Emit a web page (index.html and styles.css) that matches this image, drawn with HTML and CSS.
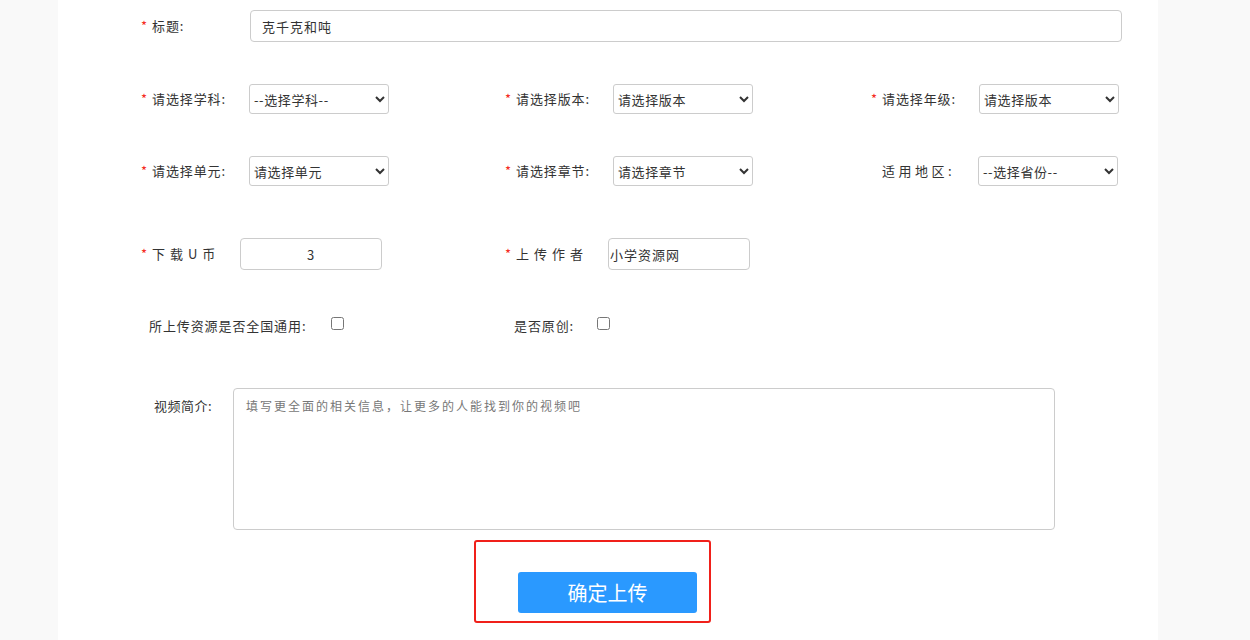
FILE: index.html
```html
<!DOCTYPE html>
<html lang="zh-CN">
<head>
<meta charset="utf-8">
<title>上传视频</title>
<link rel="stylesheet" href="styles.css">
</head>
<body>
<div class="page">
  <div class="main">
    <div class="row row-title">
      <label class="lbl w109"><span class="star">*</span>标题:</label>
      <input class="txt title-input" type="text" value="克千克和吨">
    </div>

    <div class="row row-sel r2">
      <div class="grp g1"><label class="lbl w108"><span class="star">*</span>请选择学科:</label><select class="sel"><option>--选择学科--</option></select></div>
      <div class="grp g2"><label class="lbl w108"><span class="star">*</span>请选择版本:</label><select class="sel"><option>请选择版本</option></select></div>
      <div class="grp g3"><label class="lbl w108"><span class="star">*</span>请选择年级:</label><select class="sel"><option>请选择版本</option></select></div>
    </div>

    <div class="row row-sel r3">
      <div class="grp g1"><label class="lbl w108"><span class="star">*</span>请选择单元:</label><select class="sel"><option>请选择单元</option></select></div>
      <div class="grp g2"><label class="lbl w108"><span class="star">*</span>请选择章节:</label><select class="sel"><option>请选择章节</option></select></div>
      <div class="grp g3"><label class="lbl w107"><span class="star"></span><span class="spaced">适用地区</span>:</label><select class="sel"><option>--选择省份--</option></select></div>
    </div>

    <div class="row row-inp r4">
      <div class="grp g1"><label class="lbl w99"><span class="star">*</span><span class="spaced">下载U币</span></label><input class="txt coin" type="text" value="3"></div>
      <div class="grp g2"><label class="lbl w103"><span class="star">*</span><span class="spaced">上传作者</span></label><input class="txt author" type="text" value="小学资源网"></div>
    </div>

    <div class="row row-chk r5">
      <div class="grp g1 chk1"><span class="chk-text">所上传资源是否全国通用:</span><input class="chk" type="checkbox"></div>
      <div class="grp g2 chk2"><span class="chk-text">是否原创:</span><input class="chk" type="checkbox"></div>
    </div>

    <div class="row row-area r6">
      <label class="area-lbl">视频简介:</label>
      <textarea class="area" placeholder="填写更全面的相关信息，让更多的人能找到你的视频吧"></textarea>
    </div>

    <div class="submit-box">
      <button class="btn" type="button">确定上传</button>
    </div>
  </div>
</div>
</body>
</html>
```

FILE: styles.css
```css
* { box-sizing: border-box; }

html, body {
  margin: 0;
  padding: 0;
  background: #f9f9f9;
  font-family: "Noto Sans CJK SC", "Microsoft YaHei", sans-serif;
  font-size: 13px;
  color: #333;
}

.page {
  display: flex;
  justify-content: flex-start;
  padding-left: 58px;
}

.main {
  width: 1100px;
  min-height: 640px;
  background: #fff;
  padding-top: 10px;
}

.row {
  display: flex;
  align-items: center;
  padding-left: 83px;
}

.row-title { height: 32px; }
.r2 { margin-top: 42px; height: 30px; }
.r3 { margin-top: 42px; height: 30px; }
.r4 { margin-top: 52px; height: 32px; }
.r5 { margin-top: 45px; height: 20px; }
.r6 { margin-top: 53px; align-items: flex-start; }

.grp {
  display: flex;
  align-items: center;
}
.g1 { width: 364px; }
.g2 { width: 366px; }

.lbl {
  display: flex;
  align-items: center;
  white-space: nowrap;
  color: #333;
  line-height: 18px;
  letter-spacing: 0.9px;
}
.w109 { width: 109px; }
.w108 { width: 108px; }
.w107 { width: 107px; }
.w103 { width: 103px; }
.w99 { width: 99px; }

.star {
  display: inline-block;
  width: 11px;
  color: #f52a22;
  letter-spacing: 0;
}

.spaced { letter-spacing: 5px; }
.g3 .spaced { letter-spacing: 3.5px; }

.txt {
  height: 32px;
  border: 1px solid #ccc;
  border-radius: 4px;
  font-family: inherit;
  font-size: 13px;
  letter-spacing: 1px;
  color: #333;
  background: #fff;
  outline: none;
}

.title-input {
  width: 872px;
  padding: 0 11px;
}

.coin {
  width: 142px;
  text-align: center;
  padding: 0;
}

.author {
  width: 142px;
  padding: 0 0 0 1px;
}

.sel {
  width: 140px;
  height: 30px;
  border: 1px solid #ccc;
  border-radius: 3px;
  background: #fff;
  font-family: inherit;
  font-size: 13px;
  letter-spacing: 0.6px;
  color: #333;
  padding: 0;
}

.chk1 { padding-left: 8px; }
.chk2 { padding-left: 9px; }
.chk-text { white-space: nowrap; color: #333; letter-spacing: 0.9px; }
.chk {
  width: 13px;
  height: 13px;
  margin: 0 0 4px 23px;
}
.chk1 .chk { margin-left: 25px; }

.area-lbl {
  width: 79px;
  padding-left: 13px;
  margin-top: 8px;
  white-space: nowrap;
  color: #333;
  letter-spacing: 0.5px;
}

.area {
  width: 822px;
  height: 142px;
  margin-left: 13px;
  border: 1px solid #ccc;
  border-radius: 4px;
  padding: 8px 12px;
  font-family: inherit;
  font-size: 12px;
  letter-spacing: 2px;
  resize: none;
  outline: none;
}
.area::placeholder { color: #777; letter-spacing: 2px; }

.submit-box {
  width: 237px;
  height: 83px;
  margin: 10px 0 0 416px;
  border: 2px solid #f0201a;
  border-radius: 3px;
  padding: 30px 0 0 42px;
}

.btn {
  width: 179px;
  height: 41px;
  border: none;
  border-radius: 3px;
  background: #2a99ff;
  color: #fff;
  font-family: inherit;
  font-size: 20px;
  cursor: pointer;
}
```
